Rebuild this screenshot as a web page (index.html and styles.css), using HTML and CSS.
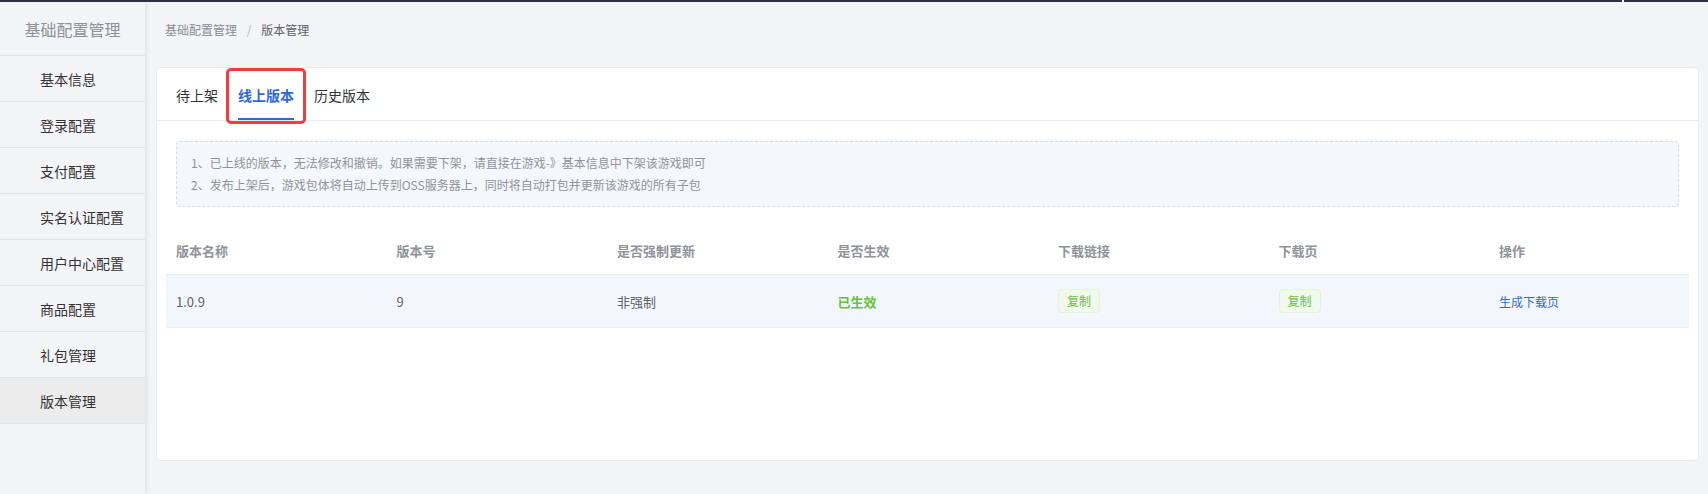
FILE: index.html
```html
<!DOCTYPE html>
<html lang="zh-CN">
<head>
<meta charset="UTF-8" />
<meta name="viewport" content="width=device-width, initial-scale=1" />
<title>版本管理</title>
<link rel="stylesheet" href="styles.css">
</head>
<body>

<div class="topbar">
  <span class="topbar-main"></span>
  <span class="topbar-end"></span>
</div>

<div class="layout">
  <aside class="sidebar">
    <div class="sidebar-title">基础配置管理</div>
    <ul class="menu">
      <li>基本信息</li>
      <li>登录配置</li>
      <li>支付配置</li>
      <li>实名认证配置</li>
      <li>用户中心配置</li>
      <li>商品配置</li>
      <li>礼包管理</li>
      <li class="active">版本管理</li>
    </ul>
  </aside>

  <main class="main">
    <div class="breadcrumb">
      <span class="crumb">基础配置管理</span>
      <span class="crumb-sep">/</span>
      <span class="crumb current">版本管理</span>
    </div>

    <div class="card">
      <div class="tabs">
        <div class="tab">待上架</div>
        <div class="tab active">线上版本</div>
        <div class="tab">历史版本</div>
      </div>
      <!-- 截图里的红框标注 -->
      <div class="mark"></div>

      <div class="card-body">
        <div class="notice">
          <p>1、已上线的版本，无法修改和撤销。如果需要下架，请直接在游戏-》基本信息中下架该游戏即可</p>
          <p>2、发布上架后，游戏包体将自动上传到OSS服务器上，同时将自动打包并更新该游戏的所有子包</p>
        </div>

        <div class="table">
          <div class="row head">
            <div class="cell">版本名称</div>
            <div class="cell">版本号</div>
            <div class="cell">是否强制更新</div>
            <div class="cell">是否生效</div>
            <div class="cell">下载链接</div>
            <div class="cell">下载页</div>
            <div class="cell">操作</div>
          </div>
          <div class="row body">
            <div class="cell">1.0.9</div>
            <div class="cell">9</div>
            <div class="cell">非强制</div>
            <div class="cell status-on">已生效</div>
            <div class="cell"><span class="tag">复制</span></div>
            <div class="cell"><span class="tag">复制</span></div>
            <div class="cell"><a class="link" href="#">生成下载页</a></div>
          </div>
        </div>
      </div>
    </div>
  </main>
</div>

</body>
</html>
```

FILE: styles.css
```css
:root {
  --page-bg: #f3f4f6;
  --line: #e3e4e6;
  --blue: #2f69d8;
  --green: #67c23a;
  --muted: #909399;
  --text: #5f6266;
}
* {
  box-sizing: border-box;
}
html, body {
  margin: 0;
  padding: 0;
}
body {
  background-color: var(--page-bg);
  font-family: "Noto Sans CJK SC", "Liberation Sans", sans-serif;
  color: #333;
  height: 494px;
  overflow: hidden;
}
p {
  margin: 0;
}

/* 顶部细条 */
.topbar {
  display: flex;
  height: 2px;
}
.topbar-main {
  flex: 0 0 1622px;
  background-color: #2e333b;
}
.topbar-end {
  flex: 1;
  margin-left: 2px;
  background-color: #2e333b;
}

.layout {
  display: flex;
  height: 492px;
}

/* 左侧菜单 */
.sidebar {
  flex: 0 0 145px;
  background-color: var(--page-bg);
  box-shadow: 2px 0 4px rgba(0, 0, 0, 0.07);
  position: relative;
  z-index: 1;
}
.sidebar-title {
  height: 54px;
  line-height: 54px;
  text-align: center;
  font-size: 16px;
  color: #8f9196;
  border-bottom: 1px solid var(--line);
}
.menu {
  list-style: none;
  margin: 0;
  padding: 0;
}
.menu li {
  height: 46px;
  line-height: 46px;
  padding-left: 40px;
  font-size: 14px;
  color: #333;
  border-bottom: 1px solid var(--line);
}
.menu li.active {
  background-color: #ececec;
}

/* 右侧内容 */
.main {
  flex: 1;
  padding: 0 9px 0 11px;
}
.breadcrumb {
  height: 55px;
  line-height: 56px;
  font-size: 12px;
  color: #8c8e93;
  padding-left: 9px;
}
.crumb-sep {
  margin: 0 7px;
  color: #b4b6ba;
}
.crumb.current {
  color: #5f6266;
}

.card {
  position: relative;
  margin-top: 10px;
  height: 394px;
  background-color: #fff;
  border: 1px solid #e9ebef;
  border-radius: 4px;
}
.tabs {
  display: flex;
  height: 53px;
  padding-left: 9px;
  border-bottom: 1px solid #e8ebf2;
}
.tab {
  margin: 0 10px;
  height: 52px;
  padding-top: 5px;
  line-height: 45px;
  font-size: 14px;
  color: #333;
  border-bottom: 2px solid transparent;
}
.tab.active {
  color: var(--blue);
  font-weight: bold;
  border-bottom-color: var(--blue);
}
.mark {
  position: absolute;
  left: 69px;
  top: 0;
  width: 80px;
  height: 56px;
  border: 3px solid #f53c3c;
  border-radius: 5px;
}

.card-body {
  padding: 20px 9px 0 9px;
}
.notice {
  margin: 0 10px;
  padding: 10px 14px;
  background-color: #f6f7fc;
  border: 1px dashed #d6dcee;
  border-radius: 4px;
  font-size: 12px;
  line-height: 22px;
  color: var(--muted);
}

.table {
  margin-top: 20px;
  font-size: 13px;
}
.row {
  display: grid;
  grid-template-columns: repeat(6, 220.5px) 1fr;
  align-items: center;
  border-bottom: 1px solid #ebeef5;
}
.row.head {
  height: 48px;
  color: var(--muted);
  font-weight: bold;
}
.row.body {
  height: 53px;
  background-color: #f3f7fd;
  color: var(--text);
}
.cell {
  padding-left: 10px;
}
.status-on {
  color: var(--green);
  font-weight: bold;
}
.tag {
  display: inline-block;
  height: 24px;
  line-height: 22px;
  padding: 0 8px;
  font-size: 12px;
  color: var(--green);
  background-color: #f0f9eb;
  border: 1px solid #e1f3d8;
  border-radius: 4px;
}
.link {
  font-size: 12px;
  color: var(--blue);
  text-decoration: none;
}
```
